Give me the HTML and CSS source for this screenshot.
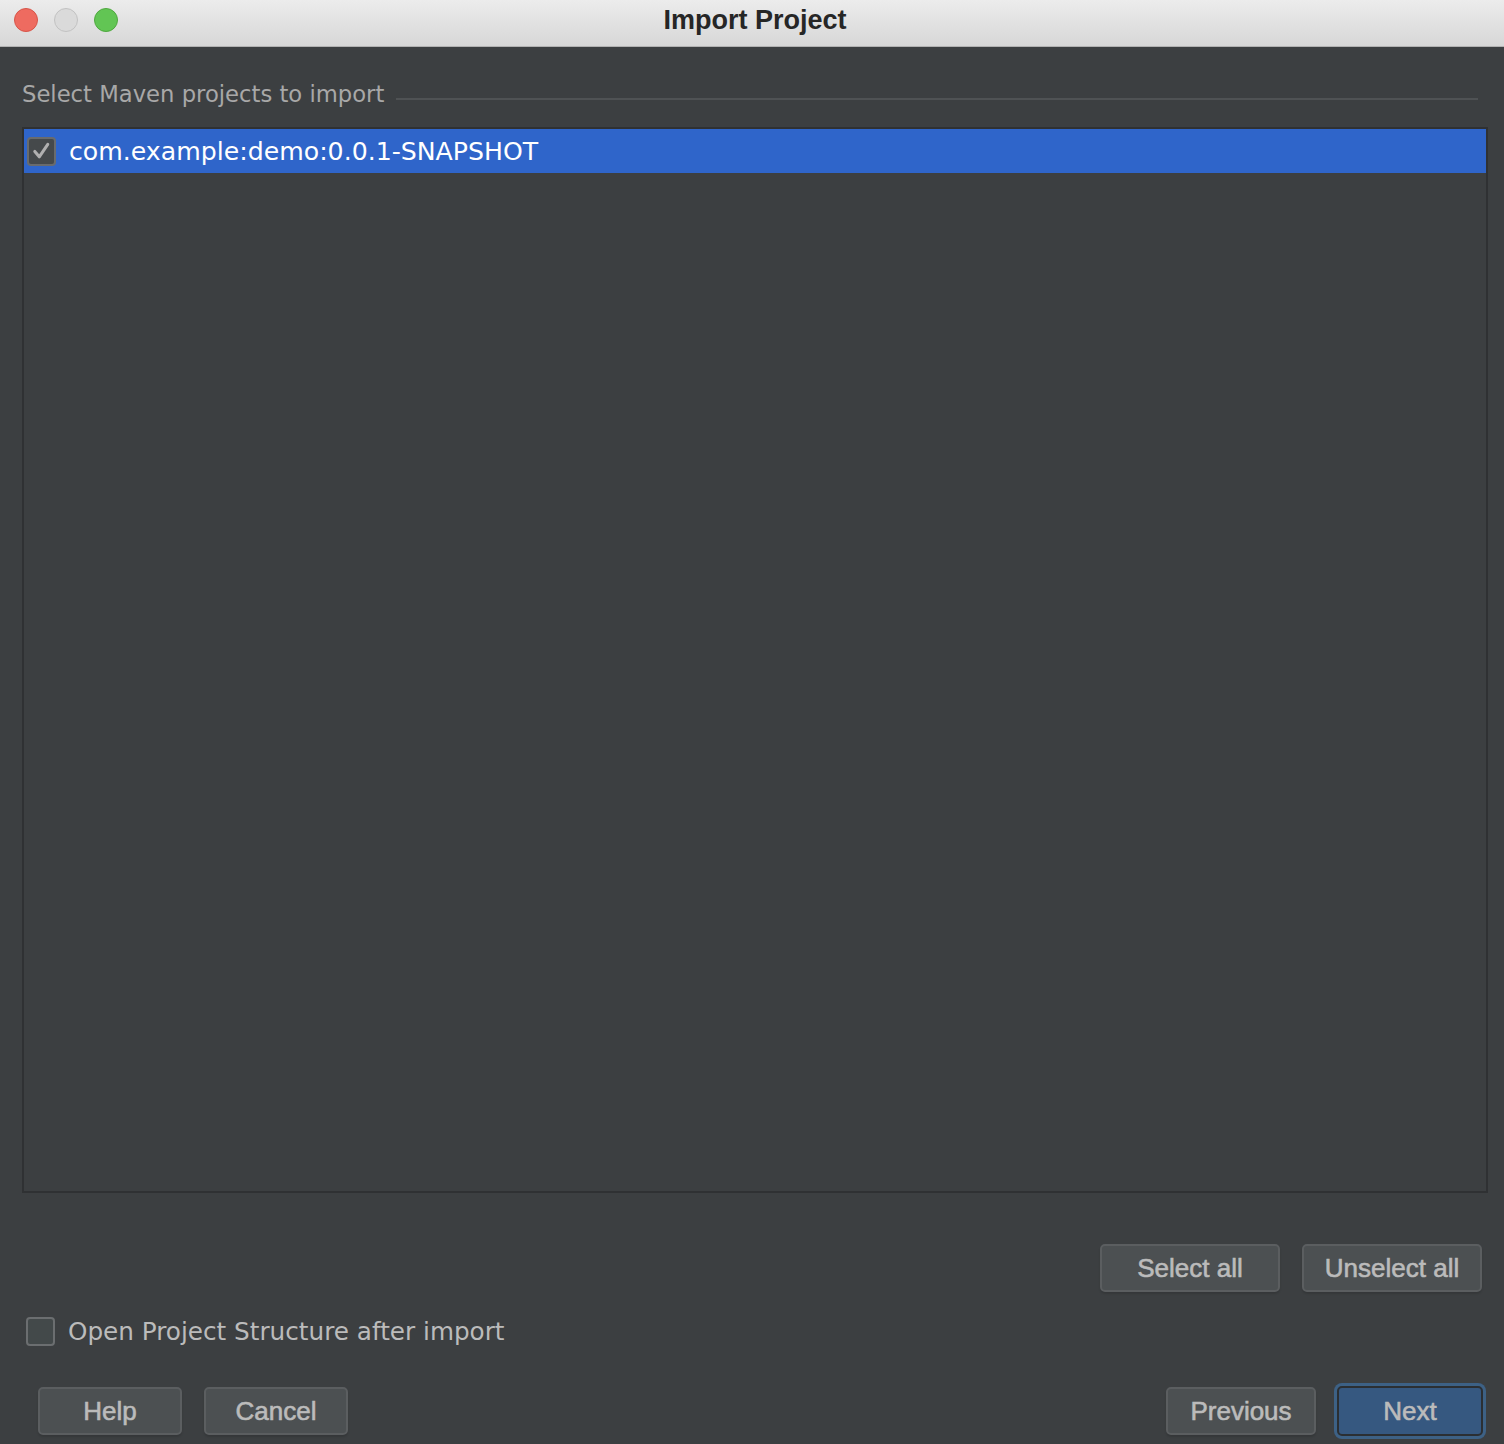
FILE: index.html
```html
<!DOCTYPE html>
<html>
<head>
<meta charset="utf-8">
<title>Import Project</title>
<link rel="stylesheet" href="styles.css">
</head>
<body>
<div class="window">
  <div class="titlebar">
    <div class="lights">
      <span class="light red"></span>
      <span class="light gray"></span>
      <span class="light green"></span>
    </div>
    <div class="title">Import Project</div>
  </div>
  <div class="content">
    <div class="group-head">
      <span class="group-label">Select Maven projects to import</span>
      <span class="group-line"></span>
    </div>
    <div class="list">
      <div class="row selected">
        <span class="cb checked">
          <svg width="28" height="28" viewBox="0 0 28 28"><path d="M6.5 14.5 L11.5 20.5 L21 6.5" fill="none" stroke="#b0b0b0" stroke-width="3.4" stroke-linecap="round" stroke-linejoin="round"/></svg>
        </span>
        <span class="row-text">com.example:demo:0.0.1-SNAPSHOT</span>
      </div>
    </div>
    <div class="sel-buttons">
      <button class="btn sel">Select all</button>
      <button class="btn unsel">Unselect all</button>
    </div>
    <div class="check-row">
      <span class="cb"></span>
      <span class="check-label">Open Project Structure after import</span>
    </div>
  </div>
  <div class="footer">
    <div class="footer-left">
      <button class="btn help">Help</button>
      <button class="btn cancel">Cancel</button>
    </div>
    <div class="footer-right">
      <button class="btn prev">Previous</button>
      <button class="btn next">Next</button>
    </div>
  </div>
</div>
</body>
</html>
```
FILE: styles.css
```css
html, body {
  margin: 0;
  padding: 0;
  background: #3c3f41;
}
.window {
  width: 1504px;
  height: 1444px;
  display: flex;
  flex-direction: column;
  background: #3c3f41;
  overflow: hidden;
}
.titlebar {
  height: 46px;
  border-bottom: 1px solid #b2b2b2;
  background: linear-gradient(#ececec, #d7d7d7);
  position: relative;
  display: flex;
  align-items: center;
  justify-content: center;
  flex-shrink: 0;
}
.lights {
  position: absolute;
  left: 14px;
  top: 8px;
  display: flex;
  gap: 16px;
}
.light {
  width: 22px;
  height: 22px;
  border-radius: 50%;
  border: 1px solid;
  display: block;
}
.red { background: #ee6b60; border-color: #d75549; }
.gray { background: #dadada; border-color: #c2c2c2; }
.green { background: #62c554; border-color: #4fa83f; }
.title {
  font-family: "Liberation Sans", Arial, sans-serif;
  font-weight: bold;
  font-size: 27px;
  color: #262626;
  margin-left: 6px;
  margin-top: -6px;
}
.content {
  padding: 0 16px 0 22px;
  display: flex;
  flex-direction: column;
}
.group-head {
  display: flex;
  align-items: center;
  height: 30px;
  margin-top: 32px;
}
.group-label {
  font-family: "DejaVu Sans", sans-serif;
  font-size: 22.7px;
  color: #a8a8a8;
  white-space: nowrap;
}
.group-line {
  flex: 1;
  height: 2px;
  background: #4f5254;
  margin-left: 12px;
  margin-right: 10px;
  margin-top: 10px;
}
.list {
  margin-top: 18px;
  height: 1062px;
  border: 2px solid #2f3133;
  background: #3c3f41;
}
.row {
  height: 44px;
  display: flex;
  align-items: center;
}
.row.selected {
  background: #2f65ca;
}
.cb {
  width: 25px;
  height: 25px;
  border: 2px solid #6b6e70;
  border-radius: 4px;
  background: #43494a;
  display: block;
  flex-shrink: 0;
}
.cb.checked {
  margin-left: 3px;
  display: flex;
  align-items: center;
  justify-content: center;
  border-color: #696b6d;
  background: #45494b;
}
.cb.checked svg { display: block; }
.row-text {
  font-family: "DejaVu Sans", sans-serif;
  font-size: 25.2px;
  color: #ffffff;
  margin-left: 13px;
  white-space: nowrap;
}
.btn {
  font-family: "Liberation Sans", Arial, sans-serif;
  font-size: 26px;
  color: #bbbbbb;
  -webkit-text-stroke: 0.6px #bbbbbb;
  background: #4c5052;
  border: 2px solid #5b5e60;
  border-radius: 5px;
  height: 48px;
  padding: 0;
  margin: 0;
  box-shadow: 0 2px 2px rgba(0,0,0,0.12);
}
.sel-buttons {
  display: flex;
  justify-content: flex-end;
  gap: 22px;
  margin-top: 51px;
  margin-right: 6px;
}
.sel { width: 180px; }
.unsel { width: 180px; }
.check-row {
  display: flex;
  align-items: center;
  margin-top: 22px;
  margin-left: 4px;
  height: 34px;
}
.check-label {
  font-family: "DejaVu Sans", sans-serif;
  font-size: 24.7px;
  color: #bbbbbb;
  margin-left: 13px;
  white-space: nowrap;
}
.footer {
  display: flex;
  justify-content: space-between;
  align-items: center;
  margin-top: 38px;
  padding: 0 21px 0 38px;
}
.footer-left, .footer-right {
  display: flex;
  align-items: center;
  gap: 22px;
}
.footer-right { gap: 21px; }
.help { width: 144px; }
.cancel { width: 144px; }
.prev { width: 150px; }
.next {
  width: 146px;
  height: 50px;
  background: #365880;
  border: 2px solid #2b2f33;
  box-shadow: 0 0 0 3px #3d6185;
  color: #bbbbbb;
}
```
